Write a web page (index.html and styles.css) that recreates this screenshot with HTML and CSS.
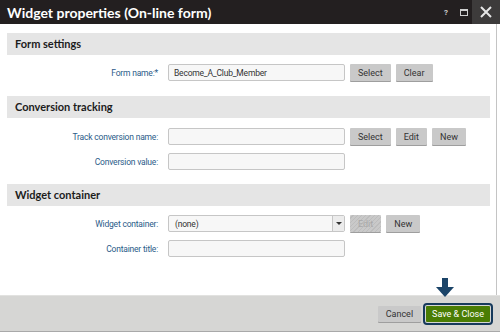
FILE: index.html
```html
<!DOCTYPE html>
<html lang="en">
<head>
    <meta charset="UTF-8">
    <title>Widget properties (On-line form)</title>
    <link rel="stylesheet" href="styles.css">
</head>
<body>
<div class="dialog">
    <div class="titlebar">
        <h1>Widget properties (On-line form)</h1>
        <div class="title-tools">
            <span class="help">?</span>
            <span class="maximize"></span>
            <span class="close">
                <svg width="12" height="12" viewBox="0 0 12 12">
                    <path d="M1 1L11 11M11 1L1 11" stroke="#e6e6e6" stroke-width="2"/>
                </svg>
            </span>
        </div>
    </div>

    <div class="content">
        <div class="section">
            <h2>Form settings</h2>
            <div class="fields">
                <div class="form-group">
                    <label for="form_name">Form name:*</label>
                    <input type="text" id="form_name" class="form-control" value="Become_A_Club_Member">
                    <button class="btn">Select</button>
                    <button class="btn">Clear</button>
                </div>
            </div>
        </div>

        <div class="section">
            <h2>Conversion tracking</h2>
            <div class="fields">
                <div class="form-group">
                    <label for="track_name">Track conversion name:</label>
                    <input type="text" id="track_name" class="form-control">
                    <button class="btn">Select</button>
                    <button class="btn">Edit</button>
                    <button class="btn">New</button>
                </div>
                <div class="form-group">
                    <label for="conv_value">Conversion value:</label>
                    <input type="text" id="conv_value" class="form-control">
                </div>
            </div>
        </div>

        <div class="section">
            <h2>Widget container</h2>
            <div class="fields">
                <div class="form-group">
                    <label for="container">Widget container:</label>
                    <div class="form-control select" id="container">
                        <span>(none)</span>
                        <span class="select-arrow"></span>
                    </div>
                    <button class="btn btn-disabled">Edit</button>
                    <button class="btn">New</button>
                </div>
                <div class="form-group">
                    <label for="container_title">Container title:</label>
                    <input type="text" id="container_title" class="form-control">
                </div>
            </div>
        </div>
    </div>

    <div class="footer">
        <span class="pointer"></span>
        <button class="btn btn-cancel">Cancel</button>
        <button class="btn btn-save">Save &amp; Close</button>
    </div>
</div>
</body>
</html>
```

FILE: styles.css
```css
body {
    margin: 0;
    background: #ffffff;
    font-family: Roboto, "Open Sans", sans-serif;
}

.dialog {
    width: 500px;
    height: 332px;
    display: flex;
    flex-direction: column;
}

.titlebar {
    height: 24px;
    background-color: #231f20;
    display: flex;
    align-items: center;
    justify-content: space-between;
}

.titlebar h1 {
    margin: 0 0 0 7px;
    color: #ffffff;
    font-family: Lato, sans-serif;
    font-size: 14px;
    font-weight: bold;
}

.title-tools {
    display: flex;
    align-items: center;
    height: 100%;
}

.help {
    color: #cfcfcf;
    font-size: 8px;
    font-weight: bold;
    margin-right: 12px;
}

.maximize {
    width: 6px;
    height: 4px;
    border: 1px solid #cfcfcf;
    border-top-width: 2px;
    margin-right: 4px;
}

.close {
    width: 28px;
    height: 100%;
    background-color: #3d3b3b;
    display: flex;
    align-items: center;
    justify-content: center;
}

.content {
    flex: 1;
    width: 489px;
    padding: 9px 0 0 7px;
    border-right: 1px solid #c4c4c4;
}

.section h2 {
    margin: 0;
    height: 22px;
    line-height: 22px;
    width: 475px;
    padding-left: 8px;
    background-color: #e5e5e5;
    font-family: Lato, sans-serif;
    font-size: 11px;
    font-weight: bold;
    color: #1c1c1c;
}

.fields {
    display: flex;
    flex-direction: column;
    gap: 8px;
    padding: 9px 0 15px;
}

.section:nth-child(2) .fields {
    padding: 10px 0 14px;
}

.form-group {
    display: flex;
    align-items: center;
    gap: 5px;
    height: 17px;
}

.form-group label {
    width: 151px;
    margin-right: 5px;
    text-align: right;
    font-size: 8.5px;
    letter-spacing: -0.2px;
    color: #2b5b89;
}

.form-control {
    box-sizing: border-box;
    width: 177px;
    height: 17px;
    padding: 0 5px;
    border: 1px solid #c6c6c6;
    border-radius: 2px;
    background-color: #f7f7f7;
    font-family: inherit;
    font-size: 8.5px;
    letter-spacing: -0.2px;
    color: #333333;
}

.select {
    display: flex;
    align-items: center;
    justify-content: space-between;
    padding: 0 0 0 6px;
}

.select-arrow {
    width: 11px;
    height: 15px;
    border-left: 1px solid #c6c6c6;
    background: #ececec;
    position: relative;
}

.select-arrow::after {
    content: "";
    position: absolute;
    left: 3px;
    top: 6px;
    border-left: 3px solid transparent;
    border-right: 3px solid transparent;
    border-top: 3px solid #333333;
}

.btn {
    height: 17px;
    padding: 0 8px;
    border: none;
    border-radius: 1px;
    background-color: #c9c9c9;
    box-shadow: 0 1px 0 #9e9e9e;
    font-family: inherit;
    font-size: 9px;
    color: #333333;
}

.btn-disabled {
    color: #a8a8a8;
    background: repeating-linear-gradient(135deg, #c9c9c9 0, #c9c9c9 2px, #bdbdbd 2px, #bdbdbd 3px);
}

.footer {
    position: relative;
    height: 35px;
    background-color: #d6d6d4;
    border-top: 1px solid #e2e2e0;
    border-bottom: 1px solid #a9a9a9;
    display: flex;
    align-items: center;
    justify-content: flex-end;
    gap: 5px;
    padding-right: 10px;
}

.btn-cancel {
    height: 16px;
    padding: 0 8px;
    margin-top: 1px;
}

.btn-save {
    height: 16px;
    padding: 0 6px;
    margin-top: 1px;
    background-color: #4a7d04;
    color: #ffffff;
    box-shadow: none;
    outline: 2px solid #173a5c;
    outline-offset: 1px;
}

.pointer {
    position: absolute;
    left: 436px;
    top: -18px;
    width: 18px;
    height: 19px;
}

.pointer::before {
    content: "";
    position: absolute;
    left: 6px;
    top: 0;
    width: 6px;
    height: 10px;
    background-color: #1b4468;
}

.pointer::after {
    content: "";
    position: absolute;
    left: 0;
    top: 9px;
    border-left: 9px solid transparent;
    border-right: 9px solid transparent;
    border-top: 10px solid #1b4468;
}
```
